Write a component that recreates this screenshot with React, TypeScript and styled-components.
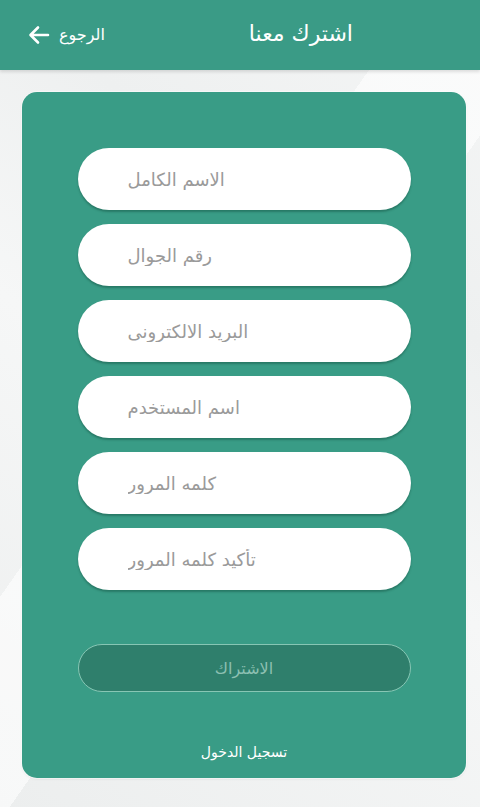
import React from 'react';
import styled, { createGlobalStyle } from 'styled-components';

const GlobalStyle = createGlobalStyle`
  html, body {
    margin: 0;
    padding: 0;
    height: 100%;
  }
  body {
    font-family: "DejaVu Sans", "Noto Sans", sans-serif;
    background: #f2f3f3;
  }
  * {
    box-sizing: border-box;
  }
`;

const fields = [
  'الاسم الكامل',
  'رقم الجوال',
  'البريد الالكترونى',
  'اسم المستخدم',
  'كلمه المرور',
  'تأكيد كلمه المرور',
];

function BackArrow() {
  return (
    <svg width="22" height="20" viewBox="0 0 22 20" fill="none">
      <path
        d="M20 10H3M10 2.5L2.5 10L10 17.5"
        stroke="#ffffff"
        strokeWidth="2.6"
        strokeLinecap="round"
        strokeLinejoin="round"
      />
    </svg>
  );
}

function App() {
  return (
    <Page>
      <GlobalStyle />
      <Header>
        <BackLink>
          <BackArrow />
          <BackText>الرجوع</BackText>
        </BackLink>
        <Title>اشترك معنا</Title>
      </Header>
      <Body>
        <Card>
          <Fields>
            {fields.map((f) => (
              <Field key={f} type={f.includes('كلمه') ? 'password' : 'text'} placeholder={f} dir="rtl" />
            ))}
          </Fields>
          <SubmitButton disabled>الاشتراك</SubmitButton>
          <LoginLink>تسجيل الدخول</LoginLink>
        </Card>
      </Body>
    </Page>
  );
}

export default App;

const Page = styled.div`
  width: 480px;
  min-height: 807px;
  display: flex;
  flex-direction: column;
  background:
    linear-gradient(125deg, transparent 40%, rgba(255, 255, 255, 0.6) 40%, rgba(255, 255, 255, 0.6) 55%, transparent 55%),
    linear-gradient(35deg, #eceeee 0%, #f6f7f7 45%, #eef0f0 70%, #f5f6f6 100%);
`;

const Header = styled.header`
  height: 70px;
  background: #3a9b86;
  display: flex;
  align-items: center;
  justify-content: space-between;
  padding: 0 127px 0 28px;
  box-shadow: 0 2px 3px rgba(0, 0, 0, 0.12);
`;

const BackLink = styled.a`
  display: flex;
  align-items: center;
  gap: 9px;
  color: #ffffff;
  cursor: pointer;
`;

const BackText = styled.span`
  font-size: 16px;
  direction: rtl;
  padding-bottom: 2px;
`;

const Title = styled.h1`
  margin: 0 0 4px 0;
  font-size: 22px;
  font-weight: normal;
  color: #ffffff;
  direction: rtl;
`;

const Body = styled.main`
  padding: 22px 14px 29px 22px;
`;

const Card = styled.section`
  height: 686px;
  background: #399c86;
  border-radius: 15px;
  box-shadow: 0 0 0 1px rgba(255, 255, 255, 0.5), 0 1px 3px rgba(0, 0, 0, 0.08);
  display: flex;
  flex-direction: column;
  align-items: center;
  padding-top: 56px;
`;

const Fields = styled.div`
  display: flex;
  flex-direction: column;
  gap: 14px;
  width: 333px;
`;

const Field = styled.input`
  height: 62px;
  width: 100%;
  border: none;
  border-radius: 31px;
  background: #ffffff;
  box-shadow: 0 2px 2px rgba(20, 80, 65, 0.45);
  padding: 0 50px;
  font-family: "DejaVu Sans", "Noto Sans", sans-serif;
  font-size: 18px;
  color: #333;
  text-align: left;
  outline: none;

  &::placeholder {
    color: #9a9a9a;
  }
`;

const SubmitButton = styled.button`
  margin-top: 54px;
  width: 333px;
  height: 48px;
  border-radius: 24px;
  background: #2f7f6c;
  border: 1.5px solid #87c6b4;
  color: #8dc0b2;
  font-family: "DejaVu Sans", "Noto Sans", sans-serif;
  font-size: 16px;
  direction: rtl;
`;

const LoginLink = styled.a`
  margin-top: 52px;
  color: #ffffff;
  font-size: 14px;
  direction: rtl;
  cursor: pointer;
`;
